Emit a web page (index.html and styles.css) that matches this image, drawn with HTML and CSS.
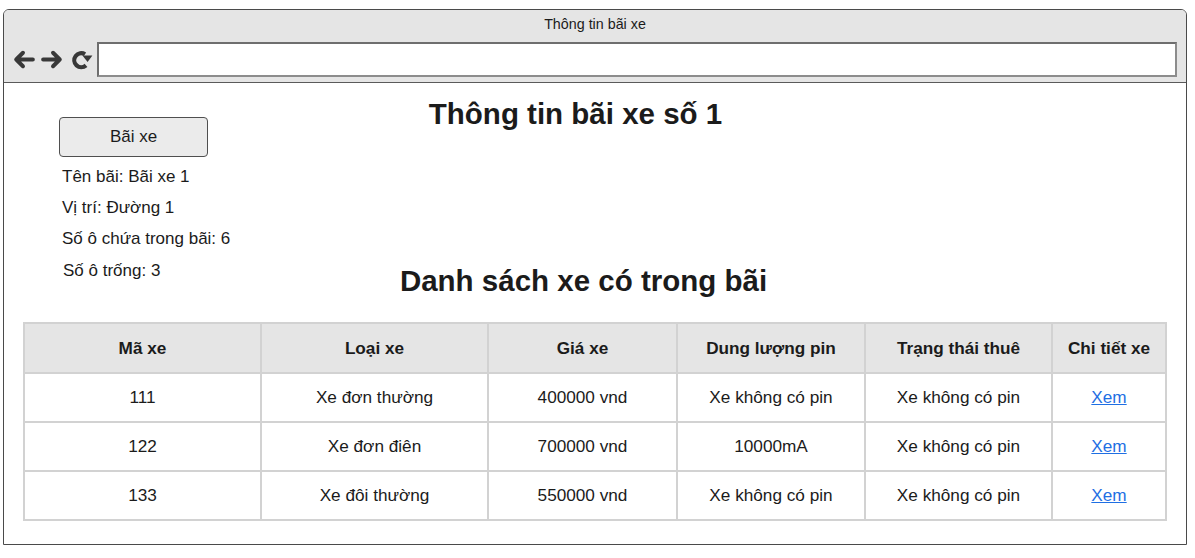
FILE: index.html
```html
<!DOCTYPE html>
<html lang="vi">
<head>
<meta charset="utf-8">
<title>Thông tin bãi xe</title>
<link rel="stylesheet" href="styles.css">
</head>
<body>
<div class="window">
  <div class="chrome">
    <div class="win-title">Thông tin bãi xe</div>
    <div class="toolbar">
      <svg class="nav-icon back" viewBox="0 0 24 24" width="25" height="25"><path d="M21 12H5M11.5 5.5L5 12l6.5 6.5" fill="none" stroke="#383838" stroke-width="3.8" stroke-linecap="round" stroke-linejoin="round"/></svg>
      <svg class="nav-icon fwd" viewBox="0 0 24 24" width="25" height="25"><path d="M3 12h16M12.5 5.5L19 12l-6.5 6.5" fill="none" stroke="#383838" stroke-width="3.8" stroke-linecap="round" stroke-linejoin="round"/></svg>
      <svg class="nav-icon reload" viewBox="0 0 24 24" width="24" height="24"><path d="M17 17.4A7 7 0 1 1 16 6.3" fill="none" stroke="#383838" stroke-width="4.2" stroke-linecap="butt"/><path d="M13.4 7.4H23.4L18.6 14z" fill="#383838"/></svg>
      <div class="address"></div>
    </div>
  </div>
  <div class="content">
    <div class="top">
      <div class="lot-info">
        <button class="lot-btn">Bãi xe</button>
        <ul class="info-list">
          <li>Tên bãi: Bãi xe 1</li>
          <li>Vị trí: Đường 1</li>
          <li>Số ô chứa trong bãi: 6</li>
          <li class="shift">Số ô trống: 3</li>
        </ul>
      </div>
      <div class="headings">
        <h1 class="h-main">Thông tin bãi xe số 1</h1>
        <h2 class="h-sub">Danh sách xe có trong bãi</h2>
      </div>
    </div>
    <table class="cars">
      <colgroup>
        <col class="c1"><col class="c2"><col class="c3"><col class="c4"><col class="c5"><col class="c6">
      </colgroup>
      <thead>
        <tr><th>Mã xe</th><th>Loại xe</th><th>Giá xe</th><th>Dung lượng pin</th><th>Trạng thái thuê</th><th>Chi tiết xe</th></tr>
      </thead>
      <tbody>
        <tr><td>111</td><td>Xe đơn thường</td><td>400000 vnd</td><td>Xe không có pin</td><td>Xe không có pin</td><td><a href="#">Xem</a></td></tr>
        <tr><td>122</td><td>Xe đơn điên</td><td>700000 vnd</td><td>10000mA</td><td>Xe không có pin</td><td><a href="#">Xem</a></td></tr>
        <tr><td>133</td><td>Xe đôi thường</td><td>550000 vnd</td><td>Xe không có pin</td><td>Xe không có pin</td><td><a href="#">Xem</a></td></tr>
      </tbody>
    </table>
  </div>
</div>
</body>
</html>
```
FILE: styles.css
```css
* { box-sizing: border-box; }
html, body { margin: 0; background: #fff; }
body {
  padding: 9px 0 0 3px;
  font-family: "Liberation Sans", Arial, sans-serif;
  color: #1b1b1b;
}
.window {
  width: 1184px;
  height: 536px;
  border: 1px solid #4a4a4a;
  border-radius: 6px 6px 0 0;
  background: #fff;
  display: flex;
  flex-direction: column;
}
.chrome {
  background: #e5e5e5;
  border-bottom: 1px solid #5a5a5a;
  border-radius: 5px 5px 0 0;
  height: 73px;
  display: flex;
  flex-direction: column;
}
.win-title {
  height: 32px;
  line-height: 28px;
  text-align: center;
  font-size: 14.3px;
  color: #1b1b1b;
}
.toolbar {
  height: 35px;
  display: flex;
  align-items: center;
  padding-left: 7px;
  padding-right: 9px;
}
.nav-icon { flex: none; display: block; }
.back { margin-right: 4px; }
.fwd { margin-right: 4px; }
.reload { margin-right: 4px; }
.address {
  flex: 1;
  height: 35px;
  background: #fff;
  border: 2px solid #8c8c8c;
  border-top-color: #6e6e6e;
  border-left-color: #6e6e6e;
}
.content { flex: 1; }
.top {
  display: grid;
}
.lot-info, .headings { grid-area: 1 / 1; }
.lot-info {
  justify-self: start;
  padding: 34px 0 0 55px;
}
.lot-btn {
  display: block;
  width: 149px;
  height: 40px;
  background: #ebebeb;
  border: 1.5px solid #4f4f4f;
  border-radius: 4px;
  font-family: inherit;
  font-size: 17px;
  color: #1b1b1b;
  padding: 0;
}
.info-list {
  list-style: none;
  margin: 4px 0 0 3px;
  padding: 0;
  font-size: 17px;
  line-height: 31px;
}
.info-list .shift { padding-left: 1px; margin-top: 1px; }
.headings { justify-self: stretch; }
.h-main, .h-sub {
  margin: 0;
  font-size: 29.5px;
  line-height: 34px;
  font-weight: bold;
  text-align: center;
  color: #1b1b1b;
}
.h-main { margin-top: 14px; padding-right: 39px; }
.h-sub { margin-top: 133px; padding-right: 23px; }
.cars {
  margin: 24px 0 0 19px;
  width: 1142px;
  border-collapse: collapse;
  table-layout: fixed;
  font-size: 17.2px;
}
.c1 { width: 237px; }
.c2 { width: 227px; }
.c3 { width: 189px; }
.c4 { width: 188px; }
.c5 { width: 187px; }
.c6 { width: 114px; }
.cars th, .cars td {
  border: 2px solid #d2d2d2;
  text-align: center;
  padding: 0;
}
.cars th {
  background: #e5e5e5;
  font-weight: bold;
  height: 50px;
}
.cars td { height: 49px; }
.cars a { color: #1f6fe3; text-decoration: underline; }
```
